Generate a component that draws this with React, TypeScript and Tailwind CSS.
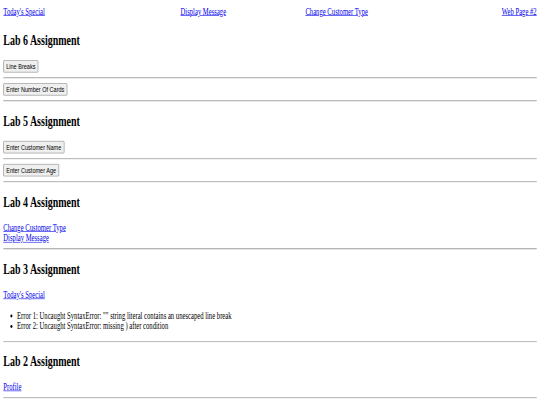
const serif = "font-['Liberation_Serif',serif]";

function Link({ children }: { children: React.ReactNode }) {
  return <a href="#" className="text-[#0000ee] underline">{children}</a>;
}

function Btn({ children }: { children: React.ReactNode }) {
  return (
    <button className="rounded-[2px] border border-[#767676] bg-[#efefef] px-[6px] py-[2px] font-['Liberation_Sans',Arial,sans-serif] text-[13.33px] leading-[normal] text-black">
      {children}
    </button>
  );
}

function Rule() {
  return <hr className="my-[8px] border-0 border-t border-t-[#808080] border-b border-b-[#d4d4d4]" />;
}

function Heading({ children, className = "" }: { children: React.ReactNode; className?: string }) {
  return <h2 className={`my-[19.92px] text-[24px] font-bold leading-[normal] ${className}`}>{children}</h2>;
}

export default function App() {
  return (
    <div className="h-screen w-full overflow-hidden bg-white">
      <div className={`w-[1300px] origin-top-left scale-x-[0.4154] scale-y-[0.59] px-[8px] pt-[11px] text-[16px] leading-[normal] text-black ${serif}`}>
        <nav className="grid grid-cols-4 pb-[6px]">
          <div className="text-left"><Link>Today's Special</Link></div>
          <div className="text-center"><Link>Display Message</Link></div>
          <div className="text-center"><Link>Change Customer Type</Link></div>
          <div className="text-right"><Link>Web Page #2</Link></div>
        </nav>

        <section>
          <Heading>Lab 6 Assignment</Heading>
          <Btn>Line Breaks</Btn>
          <Rule />
          <Btn>Enter Number Of Cards</Btn>
          <Rule />
        </section>

        <section>
          <Heading>Lab 5 Assignment</Heading>
          <Btn>Enter Customer Name</Btn>
          <Rule />
          <Btn>Enter Customer Age</Btn>
          <Rule />
        </section>

        <section>
          <Heading className="mt-[21.5px]">Lab 4 Assignment</Heading>
          <Link>Change Customer Type</Link>
          <br />
          <Link>Display Message</Link>
          <Rule />
        </section>

        <section>
          <Heading className="mb-[21px]">Lab 3 Assignment</Heading>
          <Link>Today's Special</Link>
          <ul className="mt-[17px] mb-[16px] list-disc pl-[33px]">
            <li>Error 1: Uncaught SyntaxError: "" string literal contains an unescaped line break</li>
            <li>Error 2: Uncaught SyntaxError: missing ) after condition</li>
          </ul>
          <Rule />
        </section>

        <section>
          <Heading>Lab 2 Assignment</Heading>
          <Link>Profile</Link>
          <Rule />
        </section>
      </div>
    </div>
  );
}
